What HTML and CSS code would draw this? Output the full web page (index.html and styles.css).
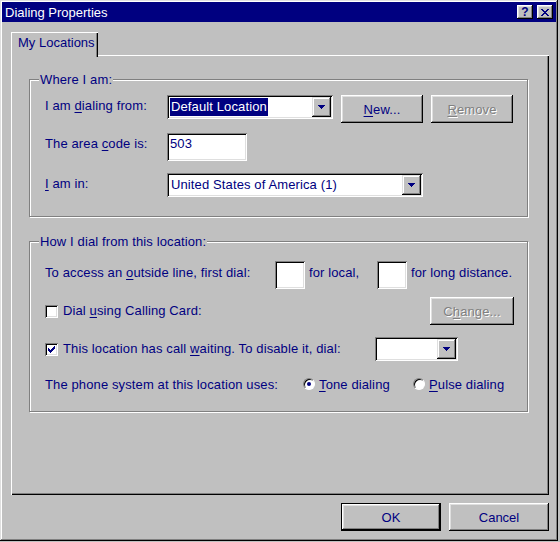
FILE: index.html
```html
<!DOCTYPE html>
<html>
<head>
	<title>Dialing Properties</title>
	<link rel="stylesheet" href="styles.css">
</head>
<body>
<div class="window">
	<div class="titlebar">
		<span class="title">Dialing Properties</span>
		<div class="caption_buttons">
			<button class="cap_btn cap_help" type="button">?</button>
			<button class="cap_btn" type="button">
				<svg width="8" height="7" viewBox="0 0 8 7"><path d="M0 0h2v1H0zM6 0h2v1H6zM1 1h2v1H1zM5 1h2v1H5zM2 2h4v1H2zM3 3h2v1H3zM2 4h4v1H2zM1 5h2v1H1zM5 5h2v1H5zM0 6h2v1H0zM6 6h2v1H6z" fill="#000080"/></svg>
			</button>
		</div>
	</div>

	<div class="client">
		<div class="tabs">
			<div class="tab">My Locations</div>
		</div>

		<div class="panel">
			<!-- where I am -->
			<fieldset class="group">
				<legend>Where I am:</legend>
				<div class="group_body body_where">
					<div class="row">
						<span class="label label_w">I am <u>d</u>ialing from:</span>
						<div class="field combo combo_from">
							<span class="combo_text"><span class="selected">Default Location</span></span>
							<span class="drop_btn"><svg width="7" height="4" viewBox="0 0 7 4"><path d="M0 0h7v1H0zM1 1h5v1H1zM2 2h3v1H2zM3 3h1v1H3z" fill="#000080"/></svg></span>
						</div>
						<button class="button btn_small" type="button"><u>N</u>ew...</button>
						<button class="button btn_small disabled" type="button"><u>R</u>emove</button>
					</div>
					<div class="row row_area">
						<span class="label label_w">The area <u>c</u>ode is:</span>
						<div class="field edit edit_area">503</div>
					</div>
					<div class="row row_country">
						<span class="label label_w"><u>I</u> am in:</span>
						<div class="field combo combo_country">
							<span class="combo_text">United States of America (1)</span>
							<span class="drop_btn"><svg width="7" height="4" viewBox="0 0 7 4"><path d="M0 0h7v1H0zM1 1h5v1H1zM2 2h3v1H2zM3 3h1v1H3z" fill="#000080"/></svg></span>
						</div>
					</div>
				</div>
			</fieldset>

			<!-- how I dial -->
			<fieldset class="group group_how">
				<legend>How I dial from this location:</legend>
				<div class="group_body body_how">
					<div class="row">
						<span class="label label_access">To access an <u>o</u>utside line, first dial:</span>
						<div class="field edit edit_prefix"></div>
						<span class="label label_local">for local,</span>
						<div class="field edit edit_prefix"></div>
						<span class="label label_long">for long distance.</span>
					</div>
					<div class="row row_card">
						<span class="check"></span>
						<span class="label label_card">Dial <u>u</u>sing Calling Card:</span>
						<button class="button btn_change disabled" type="button">C<u>h</u>ange...</button>
					</div>
					<div class="row row_wait">
						<span class="check checked">
							<svg width="13" height="13" viewBox="0 0 13 13"><path d="M3 5h1v3H3zM4 6h1v3H4zM5 7h1v3H5zM6 6h1v3H6zM7 5h1v3H7zM8 4h1v3H8zM9 3h1v3H9z" fill="#000080"/></svg>
						</span>
						<span class="label label_wait">This location has call <u>w</u>aiting. To disable it, dial:</span>
						<div class="field combo combo_wait">
							<span class="combo_text"></span>
							<span class="drop_btn"><svg width="7" height="4" viewBox="0 0 7 4"><path d="M0 0h7v1H0zM1 1h5v1H1zM2 2h3v1H2zM3 3h1v1H3z" fill="#000080"/></svg></span>
						</div>
					</div>
					<div class="row row_phone">
						<span class="label label_phone">The phone system at this location uses:</span>
						<span class="radio on"></span>
						<span class="label label_tone"><u>T</u>one dialing</span>
						<span class="radio"></span>
						<span class="label label_pulse"><u>P</u>ulse dialing</span>
					</div>
				</div>
			</fieldset>
		</div>

		<div class="footer">
			<button class="button btn_big default" type="button">OK</button>
			<button class="button btn_big" type="button">Cancel</button>
		</div>
	</div>
</div>
</body>
</html>
```

FILE: styles.css
```css
body {
	margin: 0;
	background: #c0c0c0;
	font-family: "Liberation Sans", Arial, sans-serif;
	font-size: 13px;
	line-height: 15px;
	color: #000080;
}
u {
	text-underline-offset: 2px;
}

/* window frame */
.window {
	width: 558px;
	height: 541px;
	box-sizing: border-box;
	padding: 2px;
	background: #c0c0c0;
	box-shadow: inset -1px -1px 0 #000, inset 1px 1px 0 #dfdfdf, inset -2px -2px 0 #808080, inset 2px 2px 0 #fff;
}
.titlebar {
	height: 20px;
	display: flex;
	align-items: center;
	justify-content: space-between;
	padding: 0 3px 0 3px;
	background: #000080;
	color: #fff;
}
.caption_buttons {
	display: flex;
	gap: 4px;
}
.cap_btn {
	width: 16px;
	height: 14px;
	padding: 0;
	border: 0;
	display: flex;
	align-items: center;
	justify-content: center;
	background: #c0c0c0;
	box-shadow: inset -1px -1px 0 #000, inset 1px 1px 0 #fff, inset -2px -2px 0 #808080, inset 2px 2px 0 #dfdfdf;
}
.cap_help {
	font: bold 12px/12px "Liberation Sans", Arial, sans-serif;
	color: #000080;
	padding-bottom: 1px;
}

.client {
	padding: 10px 7px 0 9px;
}

/* tab */
.tabs {
	display: flex;
}
.tab {
	position: relative;
	z-index: 1;
	width: 87px;
	height: 25px;
	margin-bottom: -2px;
	box-sizing: border-box;
	padding: 3px 0 0 7px;
	background: #c0c0c0;
	box-shadow: inset 1px 1px 0 #fff, inset -1px 0 0 #000, inset -2px 0 0 #808080;
}
.panel {
	height: 440px;
	box-sizing: border-box;
	padding: 17px 0 0 18px;
	letter-spacing: 0.12px;
	box-shadow: inset 1px 1px 0 #fff, inset -1px -1px 0 #000, inset -2px -2px 0 #808080;
}

/* group boxes */
.group {
	width: 499px;
	margin: 0;
	padding: 0;
	min-width: 0;
	box-sizing: border-box;
	border: 1px solid #808080;
	box-shadow: 1px 1px 0 #fff, inset 1px 1px 0 #fff;
}
.group legend {
	margin-left: 9px;
	padding: 0 1px;
	background: #c0c0c0;
}
.group_how {
	margin-top: 17px;
}
.group_body {
	display: flex;
	flex-direction: column;
	padding: 8px 13px 19px 15px;
}
.body_how {
	padding-top: 12px;
}
.row {
	display: flex;
	align-items: flex-start;
}
.label {
	white-space: nowrap;
}

/* where I am */
.label_w {
	width: 122px;
	margin-top: 3px;
}
.row_area {
	margin-top: 10px;
}
.row_country {
	margin-top: 12px;
}

/* sunken fields */
.field {
	box-sizing: border-box;
	background: #fff;
	box-shadow: inset 1px 1px 0 #808080, inset -1px -1px 0 #fff, inset 2px 2px 0 #000, inset -2px -2px 0 #dfdfdf;
}
.edit {
	height: 28px;
	padding: 3px 3px;
}
.edit_area {
	width: 80px;
}
.edit_prefix {
	width: 30px;
}
.combo {
	height: 24px;
	padding: 2px;
	display: flex;
}
.combo_from {
	width: 166px;
}
.combo_country {
	width: 256px;
}
.combo_wait {
	width: 83px;
}
.combo_text {
	flex: 1;
	display: flex;
	padding: 1px;
	line-height: 18px;
	white-space: nowrap;
	overflow: hidden;
}
.combo_country .combo_text {
	padding-left: 2px;
}
.selected {
	padding: 0 1px;
	background: #000080;
	color: #fff;
}
.drop_btn {
	width: 19px;
	height: 20px;
	display: flex;
	align-items: center;
	justify-content: center;
	background: #c0c0c0;
	box-shadow: inset -1px -1px 0 #000, inset 1px 1px 0 #dfdfdf, inset -2px -2px 0 #808080, inset 2px 2px 0 #fff;
}

/* push buttons */
.button {
	height: 28px;
	padding: 0;
	border: 0;
	box-sizing: border-box;
	font: inherit;
	letter-spacing: inherit;
	color: #000080;
	background: #c0c0c0;
	box-shadow: inset -1px -1px 0 #000, inset 1px 1px 0 #fff, inset -2px -2px 0 #808080, inset 2px 2px 0 #dfdfdf;
}
.btn_small {
	width: 82px;
	margin-left: 8px;
}
.btn_change {
	width: 84px;
	margin-left: auto;
}
.btn_big {
	width: 100px;
}
.default {
	border: 1px solid #000;
}
.disabled {
	color: #808080;
	text-shadow: 1px 1px 0 #fff;
}

/* how I dial */
.label_access {
	width: 230px;
	margin-top: 4px;
}
.label_local {
	width: 72px;
	margin-top: 4px;
	padding-left: 4px;
	box-sizing: border-box;
}
.label_long {
	margin-top: 4px;
	padding-left: 4px;
}
.row_card {
	margin-top: 8px;
}
.row_wait {
	margin-top: 12px;
}
.row_phone {
	margin-top: 16px;
}
.check {
	width: 13px;
	height: 13px;
	flex: none;
	box-sizing: border-box;
	background: #fff;
	box-shadow: inset 1px 1px 0 #808080, inset -1px -1px 0 #fff, inset 2px 2px 0 #000, inset -2px -2px 0 #dfdfdf;
}
.check svg {
	display: block;
}
.row_card .check {
	margin-top: 8px;
}
.row_wait .check {
	margin-top: 6px;
}
.label_card {
	margin-left: 5px;
	margin-top: 6px;
}
.label_wait {
	width: 312px;
	margin-left: 5px;
	margin-top: 4px;
}
.label_phone {
	width: 258px;
}
.radio {
	position: relative;
	width: 12px;
	height: 12px;
	flex: none;
	margin-top: 1px;
	box-sizing: border-box;
	border-radius: 50%;
	border: 1px solid;
	border-color: #808080 #fff #fff #808080;
	background: #fff;
	box-shadow: inset 1px 1px 0 #000;
}
.radio.on::after {
	content: "";
	position: absolute;
	left: 3px;
	top: 3px;
	width: 4px;
	height: 4px;
	border-radius: 50%;
	background: #000080;
}
.label_tone {
	width: 98px;
	padding-left: 4px;
	box-sizing: border-box;
}
.label_pulse {
	padding-left: 4px;
}

.footer {
	display: flex;
	justify-content: flex-end;
	gap: 8px;
	margin-top: 8px;
}
```
